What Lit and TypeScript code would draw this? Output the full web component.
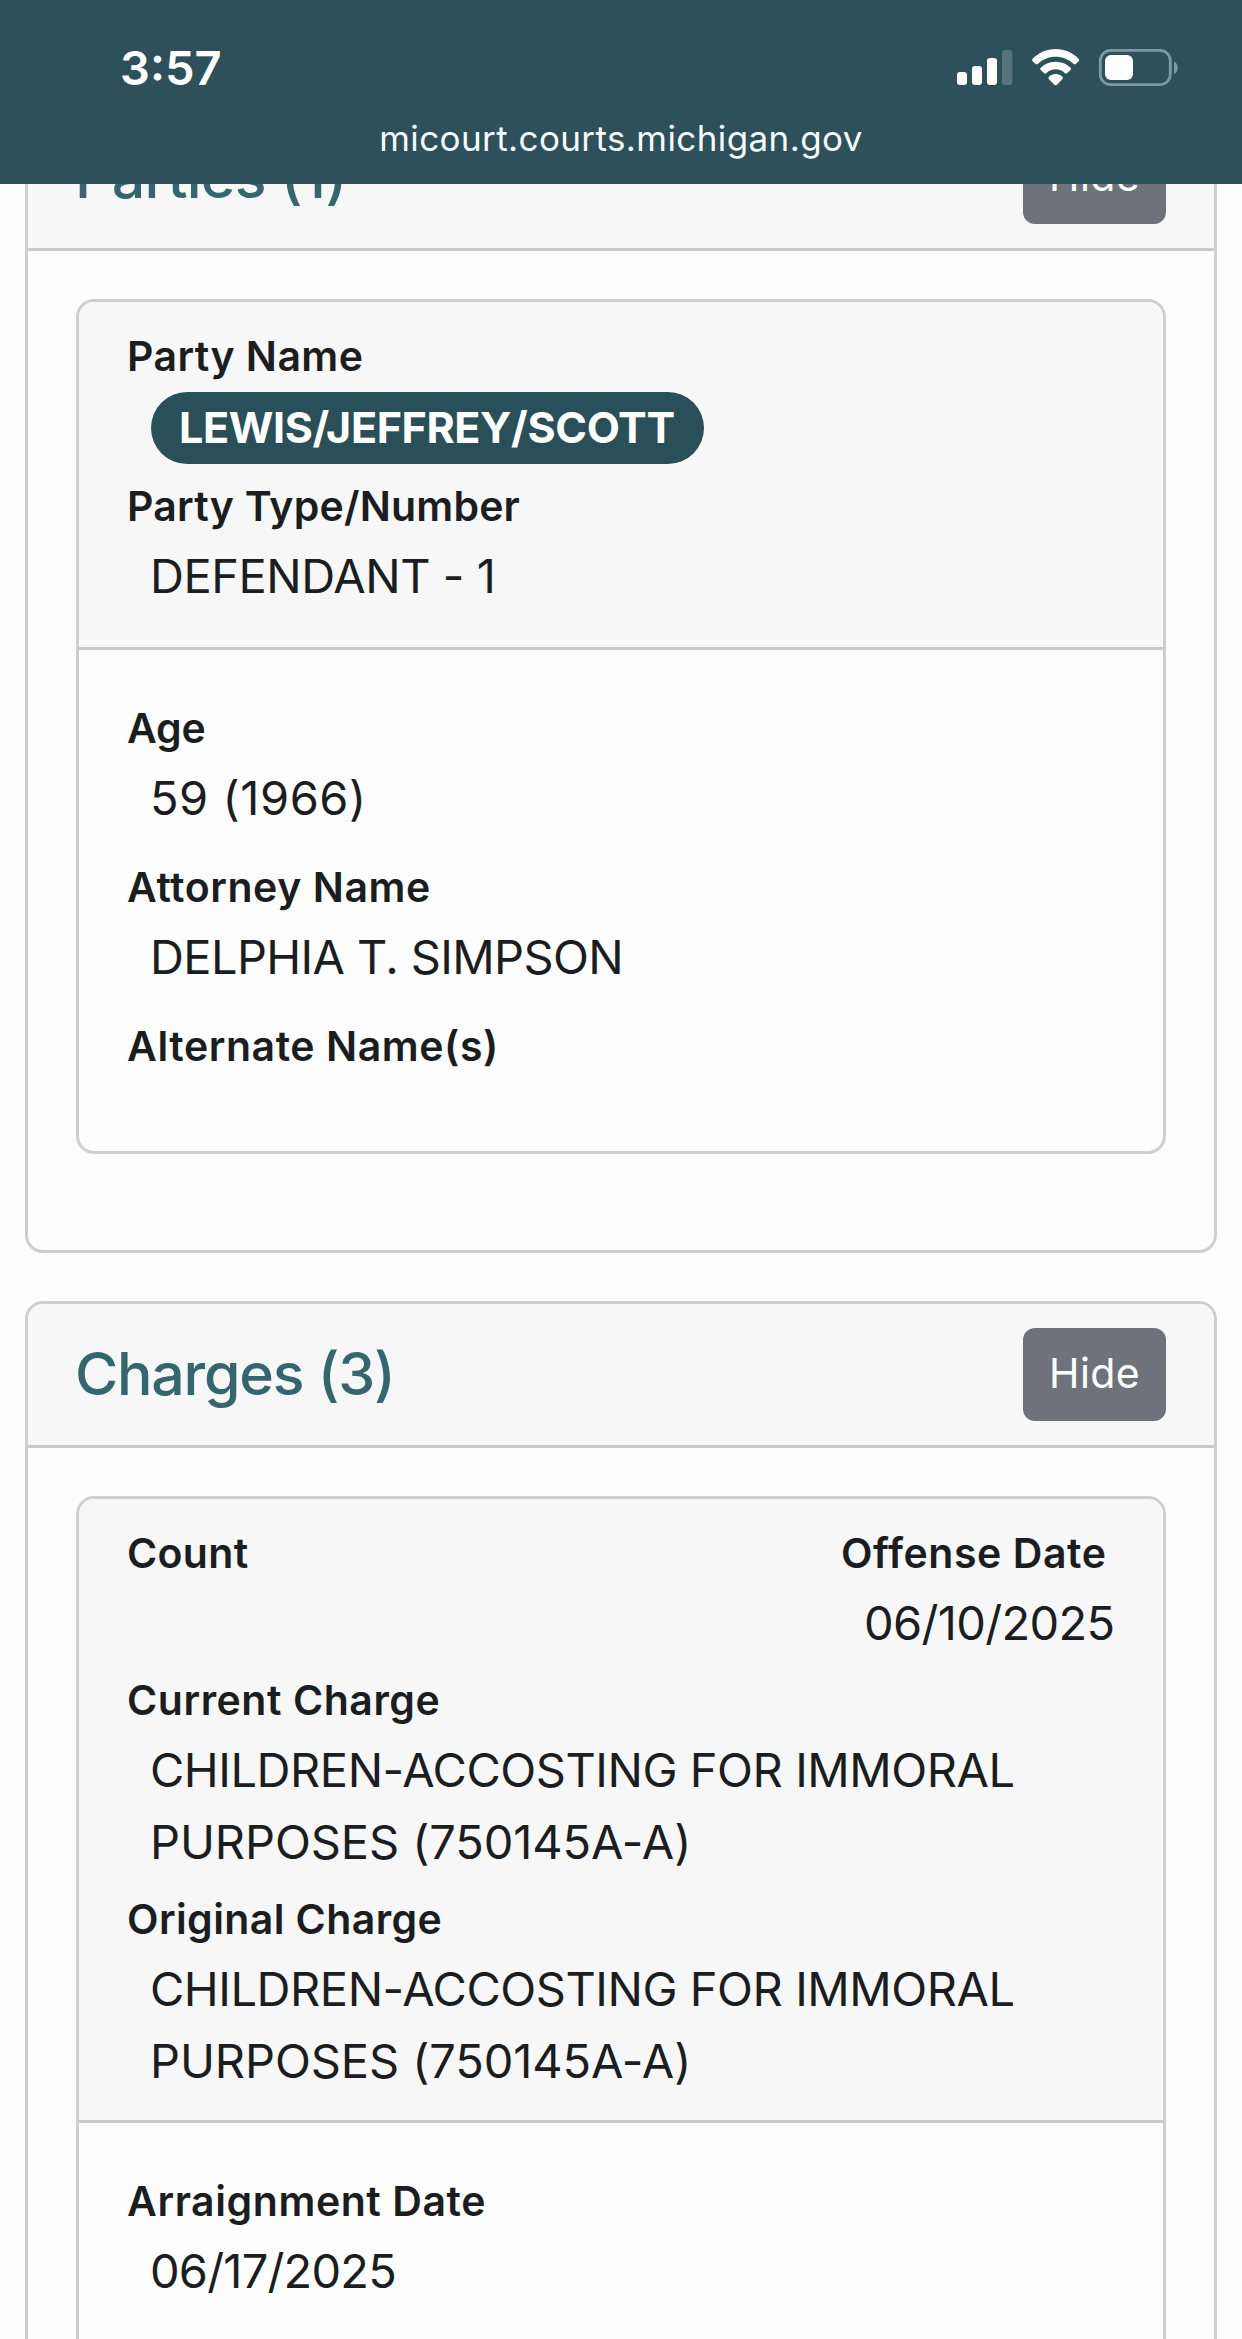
import { LitElement, html, css, nothing } from 'lit';
import { customElement, property } from 'lit/decorators.js';
import { styleMap } from 'lit/directives/style-map.js';

/** A run of text and its tracking in px. */
interface Run {
  text: string;
  track: number;
}

interface Field {
  label: Run;
  lines?: Run[];
  badge?: boolean;
}

const run = (text: string, track = 0): Run => ({ text, track });

const drawRun = (r: Run) =>
  html`<span style=${styleMap({ letterSpacing: `${r.track}px` })}>${r.text}</span>`;

@customElement('status-bar')
export class StatusBar extends LitElement {
  static styles = css`
    :host {
      display: flex;
      flex-direction: column;
      box-sizing: border-box;
      height: 184px;
      background: #2d505a;
      color: #fff;
      position: relative;
      z-index: 1;
    }
    .top {
      display: flex;
      justify-content: space-between;
      align-items: center;
      height: 96px;
      padding: 38px 63px 0 120px;
      box-sizing: border-box;
    }
    .time {
      font-size: 47px;
      font-weight: 600;
      line-height: 56px;
      padding-top: 2px;
    }
    .icons {
      display: flex;
      align-items: center;
    }
    svg {
      display: block;
    }
    .url {
      text-align: center;
      font-size: 35px;
      line-height: 44px;
      letter-spacing: 0.4px;
      margin-top: 20px;
      color: #f4fbfd;
    }
  `;

  render() {
    return html`
      <div class="top">
        <div class="time">3:57</div>
        <div class="icons">
          <svg width="222" height="40" viewBox="957 47 222 40" fill="#fff">
            <rect x="957" y="72" width="10" height="13" rx="3" />
            <rect x="972" y="66" width="10" height="19" rx="3" />
            <rect x="987" y="58" width="10" height="27" rx="3" />
            <rect x="1002" y="50" width="10.4" height="35" rx="3" opacity="0.2" />
            <g transform="translate(900 0) scale(0.33333)">
              <path d="M398 176C416 158 440 147 467 147S518 158 536 176Q540 180 536 184L528 191Q524 195 520 191C506 178 488 170 467 170S428 178 414 191Q410 195 406 191L398 184Q394 180 398 176Z" />
              <path d="M422 203C434 191 449 185 467 185S500 191 512 203Q515 206 512 210L502 219Q498 222 494 219C487 212 478 208 467 208S447 212 440 219Q436 222 432 219L422 210Q419 206 422 203Z" />
              <path d="M447 230C452 225 459 222 467 222S482 225 487 230Q491 234 487 238L471 254Q467 258 463 254L447 238Q443 234 447 230Z" />
            </g>
            <rect x="1100.3" y="50.3" width="70" height="34.4" rx="10.5" fill="none" stroke="#7d9aa4" stroke-width="2.8" />
            <rect x="1105" y="55" width="28" height="25" rx="6" />
            <path d="M1174 61.5C1179 63.5 1179 72 1174 74Z" fill="#7d9aa4" />
          </svg>
        </div>
      </div>
      <div class="url">micourt.courts.michigan.gov</div>
    `;
  }
}

@customElement('record-field')
export class RecordField extends LitElement {
  @property({ attribute: false }) field!: Field;

  static styles = css`
    :host {
      display: block;
    }
    .label {
      font-size: 41px;
      font-weight: 600;
      line-height: 68px;
      white-space: nowrap;
    }
    .value {
      font-size: 47px;
      line-height: 72px;
      padding-left: 23px;
      white-space: nowrap;
    }
    .value span {
      display: block;
    }
    .pill {
      display: block;
      width: fit-content;
      box-sizing: border-box;
      height: 72px;
      line-height: 71px;
      margin: 2px 0 1px 24px;
      padding: 0 29px 0 28px;
      border-radius: 36px;
      background: #294f59;
      color: #fff;
      font-size: 43px;
      font-weight: 700;
      white-space: nowrap;
    }
  `;

  render() {
    const { label, lines, badge } = this.field;
    return html`
      <div class="label">${drawRun(label)}</div>
      ${!lines
        ? nothing
        : badge
          ? html`<div class="pill">${lines.map(drawRun)}</div>`
          : html`<div class="value">${lines.map(drawRun)}</div>`}
    `;
  }
}

@customElement('section-card')
export class SectionCard extends LitElement {
  @property({ attribute: false }) heading!: Run;

  static styles = css`
    :host {
      display: block;
      box-sizing: border-box;
      border: 3px solid #cfcfcf;
      border-radius: 18px;
      overflow: hidden;
    }
    .head {
      display: flex;
      justify-content: space-between;
      align-items: center;
      box-sizing: border-box;
      height: 144px;
      padding: 0 48px;
      border-bottom: 3px solid #cacaca;
      background: #f7f7f7;
    }
    .title {
      margin: 0 0 2px -1px;
      font-size: 59px;
      font-weight: 500;
      line-height: 72px;
      color: #33666f;
    }
    .hide {
      width: 143px;
      height: 93px;
      padding: 0 0 3px;
      border: 0;
      border-radius: 12px;
      background: #6e737b;
      color: #fff;
      font: inherit;
      font-size: 41px;
      letter-spacing: 0.37px;
    }
    .body {
      padding: 48px;
    }
  `;

  render() {
    return html`
      <div class="head">
        <div class="title">${drawRun(this.heading)}</div>
        <button class="hide">Hide</button>
      </div>
      <div class="body"><slot></slot></div>
    `;
  }
}

const partyHead: Field[] = [
  { label: run('Party Name', 0.4), lines: [run('LEWIS/JEFFREY/SCOTT', -0.36)], badge: true },
  { label: run('Party Type/Number', 0.2), lines: [run('DEFENDANT - 1', -0.45)] },
];

const partyBody: Field[] = [
  { label: run('Age', -0.2), lines: [run('59 (1966)', 0.55)] },
  { label: run('Attorney Name', 0.55), lines: [run('DELPHIA T. SIMPSON', -0.62)] },
  { label: run('Alternate Name(s)', 0.56) },
];

const count: Field = { label: run('Count', 0.33) };
const offense: Field = { label: run('Offense Date', 0.58), lines: [run('06/10/2025', -0.65)] };
const chargeLines = [run('CHILDREN-ACCOSTING FOR IMMORAL', -0.46), run('PURPOSES (750145A-A)', -0.09)];

const chargeHead: Field[] = [
  { label: run('Current Charge', 0.55), lines: chargeLines },
  { label: run('Original Charge', 0.4), lines: chargeLines },
];

const chargeBody: Field[] = [
  { label: run('Arraignment Date', 0.57), lines: [run('06/17/2025', -0.8)] },
];

const drawFields = (fields: Field[]) =>
  fields.map((f) => html`<record-field .field=${f}></record-field>`);

@customElement('app-root')
export class AppRoot extends LitElement {
  static styles = css`
    :host {
      display: block;
      height: 2339px;
      overflow: hidden;
      background: #fdfdfd;
      color: #1b1d1f;
      font-family: Inter, 'Liberation Sans', sans-serif;
    }
    /* The page is scrolled, so its first card starts under the status bar. */
    .page {
      display: flex;
      flex-direction: column;
      gap: 48px;
      margin-top: -80px;
      padding: 0 25px;
    }
    .record {
      box-sizing: border-box;
      border: 3px solid #cfcfcf;
      border-radius: 18px;
      overflow: hidden;
    }
    .record-head,
    .record-body {
      display: flex;
      flex-direction: column;
      box-sizing: border-box;
      padding: 20px 48px 0;
    }
    .record-head {
      gap: 7px;
      background: #f7f7f7;
      border-bottom: 3px solid #cacaca;
    }
    .record-body {
      gap: 19px;
      padding-top: 44px;
    }
    .party-head {
      height: 348px;
    }
    .party-body {
      height: 501px;
    }
    .charge-head {
      height: 624px;
    }
    .charge-body {
      height: 600px;
    }
    .party {
      margin-bottom: 48px;
    }
    .split {
      display: flex;
      justify-content: space-between;
    }
    .offense {
      width: 274px;
    }
  `;

  render() {
    return html`
      <status-bar></status-bar>
      <main class="page">
        <section-card .heading=${run('Parties (1)', -0.8)}>
          <div class="record party">
            <div class="record-head party-head">${drawFields(partyHead)}</div>
            <div class="record-body party-body">${drawFields(partyBody)}</div>
          </div>
        </section-card>
        <section-card .heading=${run('Charges (3)', -1.25)}>
          <div class="record">
            <div class="record-head charge-head">
              <div class="split">
                <record-field .field=${count}></record-field>
                <record-field class="offense" .field=${offense}></record-field>
              </div>
              ${drawFields(chargeHead)}
            </div>
            <div class="record-body charge-body">${drawFields(chargeBody)}</div>
          </div>
        </section-card>
      </main>
    `;
  }
}
